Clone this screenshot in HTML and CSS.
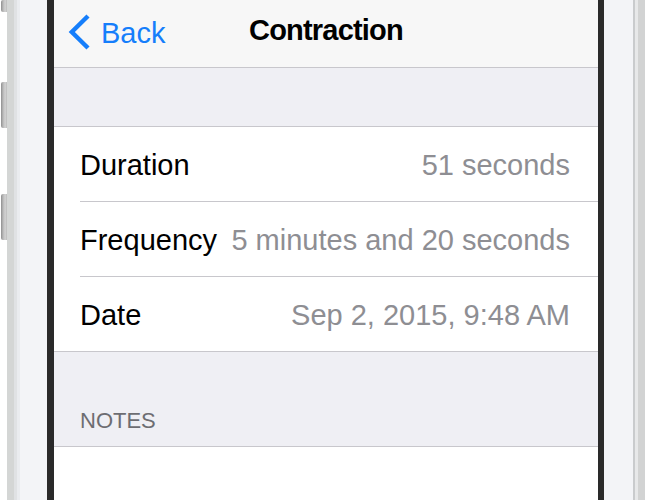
FILE: index.html
```html
<!DOCTYPE html>
<html lang="en">
<head>
<meta charset="utf-8">
<title>Contraction</title>
<link rel="stylesheet" href="styles.css">
</head>
<body>
<div class="device">
  <div class="buttons">
    <div class="btn btn-top"></div>
    <div class="btn btn-mid"></div>
    <div class="btn btn-low"></div>
  </div>
  <div class="shell">
    <div class="shell-a">
      <div class="shell-b">
        <div class="bezel">
          <div class="screen">
            <header class="nav">
              <div class="nav-back">
                <svg class="chevron" width="26" height="38" viewBox="0 0 26 38" aria-hidden="true">
                  <path d="M22 3 L5.8 19 L22 35" fill="none" stroke="#157efb" stroke-width="4.4"/>
                </svg>
                <span class="back-label">Back</span>
              </div>
              <div class="nav-title">Contraction</div>
              <div class="nav-spacer"></div>
            </header>
            <div class="spacer-section"></div>
            <div class="group">
              <div class="row">
                <div class="row-inner">
                  <span class="label">Duration</span>
                  <span class="value">51 seconds</span>
                </div>
              </div>
              <div class="row">
                <div class="row-inner">
                  <span class="label">Frequency</span>
                  <span class="value">5 minutes and 20 seconds</span>
                </div>
              </div>
              <div class="row row-last">
                <div class="row-inner">
                  <span class="label">Date</span>
                  <span class="value">Sep 2, 2015, 9:48 AM</span>
                </div>
              </div>
            </div>
            <div class="section-header">NOTES</div>
            <div class="notes"></div>
          </div>
        </div>
      </div>
    </div>
  </div>
</div>
</body>
</html>
```
FILE: styles.css
```css
* { box-sizing: border-box; }

html, body {
  margin: 0;
  padding: 0;
  background: #ffffff;
  overflow: hidden;
}

body {
  font-family: "Liberation Sans", Arial, sans-serif;
  width: 645px;
  height: 500px;
}

.device {
  display: flex;
  height: 500px;
}

.buttons {
  width: 7px;
  display: flex;
  flex-direction: column;
  align-items: flex-end;
}

.btn {
  width: 6px;
  border-radius: 2px 0 0 2px;
  background: linear-gradient(to right, #8f8f8f 0%, #b9b9b9 35%, #d2d2d2 70%, #bcbcbc 100%);
}

.btn-top { height: 12px; }
.btn-mid { margin-top: 70px; height: 46px; }
.btn-low { margin-top: 66px; height: 46px; }

.shell {
  flex: 1;
  display: flex;
  border-left: 7px solid #d4d6d5;
  border-right: 7px solid #d2d3d3;
}

.shell-a {
  flex: 1;
  display: flex;
  border-left: 3px solid #e0e2e4;
  border-right: 3px solid #e7e8e9;
}

.shell-b {
  flex: 1;
  display: flex;
  border-left: 3px solid #eaecef;
  border-right: 2px solid #c9cbcd;
}

.bezel {
  flex: 1;
  display: flex;
  background: #f3f4f7;
  padding: 0 29px 0 27px;
}

.screen {
  flex: 1;
  display: flex;
  flex-direction: column;
  background: #ffffff;
  border-left: 7px solid #2a2a2a;
  border-right: 6px solid #2a2a2a;
}

/* Navigation bar */
.nav {
  height: 68px;
  flex: none;
  background: #f7f7f7;
  border-bottom: 1px solid #c8c7cc;
  display: grid;
  grid-template-columns: 1fr auto 1fr;
  align-items: start;
  padding-top: 13px;
  font-size: 29px;
  line-height: 34px;
}

.nav-back {
  display: flex;
  align-items: center;
  gap: 9px;
  padding-left: 12px;
  color: #157efb;
}

.chevron {
  display: block;
  flex: none;
}

.back-label {
  position: relative;
  top: 1px;
}

.nav-title {
  font-weight: bold;
  color: #000000;
  letter-spacing: -0.8px;
}

/* Grouped table */
.spacer-section {
  height: 59px;
  flex: none;
  background: #efeff4;
  border-bottom: 1px solid #c8c7cc;
}

.group {
  flex: none;
  background: #ffffff;
  border-bottom: 1px solid #c8c7cc;
}

.row {
  padding-left: 26px;
}

.row-inner {
  height: 75px;
  display: flex;
  justify-content: space-between;
  gap: 14px;
  padding: 3px 28px 0 0;
  border-bottom: 1px solid #c8c7cc;
  font-size: 29px;
  line-height: 70px;
  white-space: nowrap;
}

.row-last .row-inner {
  height: 74px;
  border-bottom: none;
}

.label {
  color: #000000;
}

.value {
  color: #8e8e93;
}

.section-header {
  height: 95px;
  flex: none;
  background: #efeff4;
  border-bottom: 1px solid #c8c7cc;
  padding: 56px 0 0 26px;
  font-size: 22px;
  line-height: 26px;
  color: #6d6d72;
}

.notes {
  flex: 1;
  background: #ffffff;
}
```
